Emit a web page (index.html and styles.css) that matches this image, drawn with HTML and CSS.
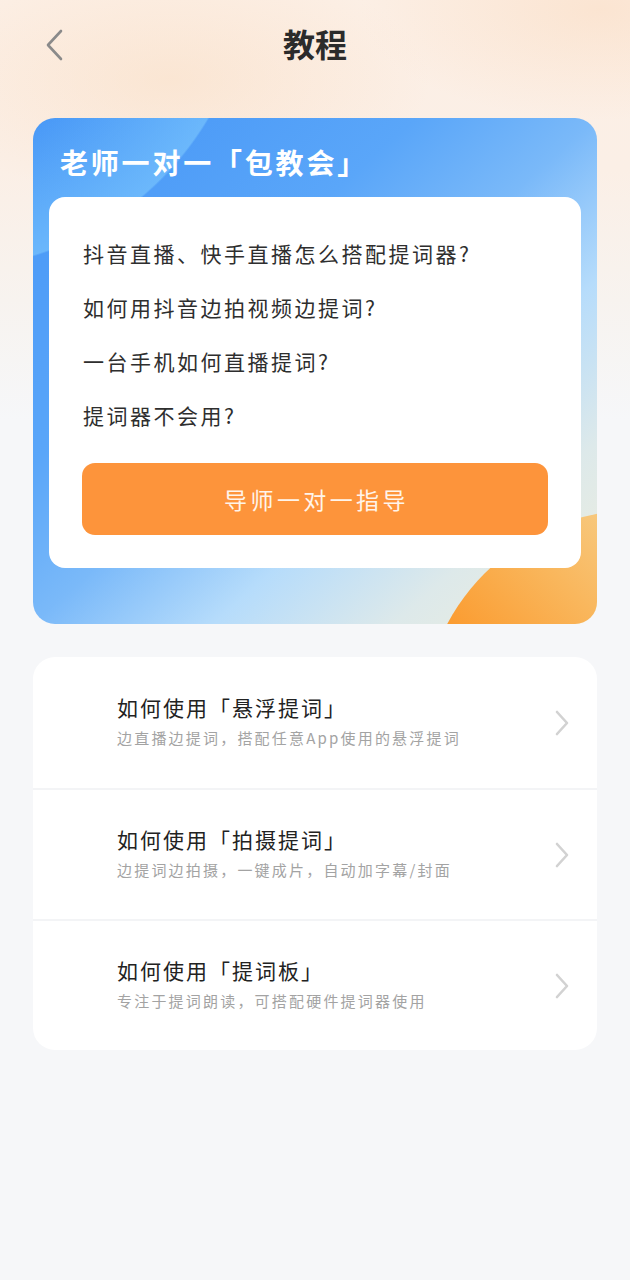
FILE: index.html
```html
<!DOCTYPE html>
<html lang="zh-CN">
<head>
<meta charset="utf-8">
<title>教程</title>
<link rel="stylesheet" href="styles.css">
</head>
<body>
<div class="page">
  <header class="nav">
    <button class="back" aria-label="返回">
      <svg width="20" height="32" viewBox="0 0 20 32"><path d="M17 2 L4 16 L17 30" fill="none" stroke="#8a8a8a" stroke-width="2.6" stroke-linecap="round" stroke-linejoin="round"/></svg>
    </button>
    <h1 class="nav-title">教程</h1>
    <span></span>
  </header>

  <section class="promo">
    <h2 class="promo-title">老师一对一「包教会」</h2>
    <div class="panel">
      <ul class="questions">
        <li>抖音直播、快手直播怎么搭配提词器?</li>
        <li>如何用抖音边拍视频边提词?</li>
        <li>一台手机如何直播提词?</li>
        <li>提词器不会用?</li>
      </ul>
      <button class="cta">导师一对一指导</button>
    </div>
  </section>

  <section class="guides">
    <a class="guide">
      <div class="guide-text">
        <div class="guide-title">如何使用「悬浮提词」</div>
        <div class="guide-sub">边直播边提词，搭配任意App使用的悬浮提词</div>
      </div>
      <svg class="chev" width="16" height="28" viewBox="0 0 16 28"><path d="M3 3 L13 14 L3 25" fill="none" stroke="#d2d2d2" stroke-width="2.6" stroke-linecap="round" stroke-linejoin="round"/></svg>
    </a>
    <a class="guide">
      <div class="guide-text">
        <div class="guide-title">如何使用「拍摄提词」</div>
        <div class="guide-sub">边提词边拍摄，一键成片，自动加字幕/封面</div>
      </div>
      <svg class="chev" width="16" height="28" viewBox="0 0 16 28"><path d="M3 3 L13 14 L3 25" fill="none" stroke="#d2d2d2" stroke-width="2.6" stroke-linecap="round" stroke-linejoin="round"/></svg>
    </a>
    <a class="guide">
      <div class="guide-text">
        <div class="guide-title">如何使用「提词板」</div>
        <div class="guide-sub">专注于提词朗读，可搭配硬件提词器使用</div>
      </div>
      <svg class="chev" width="16" height="28" viewBox="0 0 16 28"><path d="M3 3 L13 14 L3 25" fill="none" stroke="#d2d2d2" stroke-width="2.6" stroke-linecap="round" stroke-linejoin="round"/></svg>
    </a>
  </section>
</div>
</body>
</html>
```

FILE: styles.css
```css
* { box-sizing: border-box; }
html, body { margin: 0; padding: 0; }
body {
  font-family: "Noto Sans CJK SC", "Noto Sans", sans-serif;
  background: #f6f7f9;
}
.page {
  width: 630px;
  min-height: 1280px;
  background:
    radial-gradient(ellipse 260px 120px at 170px 80px, rgba(250, 222, 196, 0.55), rgba(250, 222, 196, 0) 100%),
    radial-gradient(ellipse 240px 110px at 600px 10px, rgba(250, 218, 190, 0.5), rgba(250, 218, 190, 0) 100%),
    linear-gradient(to bottom, #fcefe5 0px, #fbefe6 170px, #f7f3ef 300px, #f6f7f9 420px, #f6f7f9 100%);
  overflow: hidden;
}

/* nav */
.nav {
  height: 90px;
  display: grid;
  grid-template-columns: 1fr auto 1fr;
  align-items: center;
  padding: 0 42px;
}
.back {
  width: 24px;
  height: 34px;
  padding: 0;
  border: 0;
  background: none;
  display: flex;
  align-items: center;
  justify-content: center;
  justify-self: start;
}
.nav-title {
  margin: 0 0 4px;
  font-size: 32px;
  font-weight: 700;
  color: #2b2b2b;
  line-height: 40px;
}

/* promo card */
.promo {
  position: relative;
  margin: 28px 33px 0;
  padding: 0 16px 56px;
  border-radius: 22px;
  overflow: hidden;
  background:
    radial-gradient(circle 308px at -89px -156px, rgba(130, 205, 255, 0) 55%, rgba(130, 205, 255, 0.55) 99.4%, rgba(130, 205, 255, 0) 100%),
    linear-gradient(to bottom right, #4595f6 0%, #5aa6f9 34%, #7ab9f9 50%, #b6dcfb 66%, #dde9ea 82%, #efeedd 100%);
}
.promo::after {
  content: "";
  position: absolute;
  left: 389px;
  top: 392px;
  width: 430px;
  height: 430px;
  border-radius: 50%;
  background: linear-gradient(225deg, #f6d496 20%, #f7c97f 29%, #f9b75d 42%, #fb9c31 60%, #fb9428 72%);
  z-index: 0;
}
.promo-title {
  position: relative;
  z-index: 1;
  margin: 0 0 19px;
  padding: 28px 0 0 11px;
  font-size: 28px;
  font-weight: 700;
  line-height: 32px;
  color: #ffffff;
  letter-spacing: 2.8px;
}
.panel {
  position: relative;
  z-index: 1;
  background: #ffffff;
  border-radius: 16px;
  padding: 29px 33px 33px;
}
.questions {
  list-style: none;
  margin: 0 0 21px;
  padding: 0 0 0 1px;
}
.questions li {
  height: 54px;
  line-height: 54px;
  font-size: 21px;
  color: #2e2e2e;
  letter-spacing: 2.5px;
  white-space: nowrap;
}
.cta {
  display: block;
  width: 100%;
  height: 72px;
  border: 0;
  border-radius: 13px;
  background: #fd943b;
  color: #fff4ea;
  font-family: inherit;
  font-size: 23px;
  letter-spacing: 3.4px;
  padding: 0 0 0 3px;
}

/* guides list */
.guides {
  margin: 33px 33px 0;
  background: #ffffff;
  border-radius: 22px;
  overflow: hidden;
}
.guide {
  height: 131px;
  display: flex;
  align-items: center;
  justify-content: space-between;
  padding: 0 27px 5px 84px;
}
.guide + .guide {
  border-top: 2px solid #f3f4f6;
}
.guide .chev {
  margin-top: 5px;
}
.guide-text {
  display: flex;
  flex-direction: column;
  gap: 5px;
}
.guide-title {
  font-size: 21px;
  line-height: 30px;
  color: #222222;
  letter-spacing: 2px;
}
.guide-sub {
  font-size: 15px;
  line-height: 22px;
  color: #a3a3a3;
  letter-spacing: 2.2px;
}
.chev {
  display: block;
}
```
